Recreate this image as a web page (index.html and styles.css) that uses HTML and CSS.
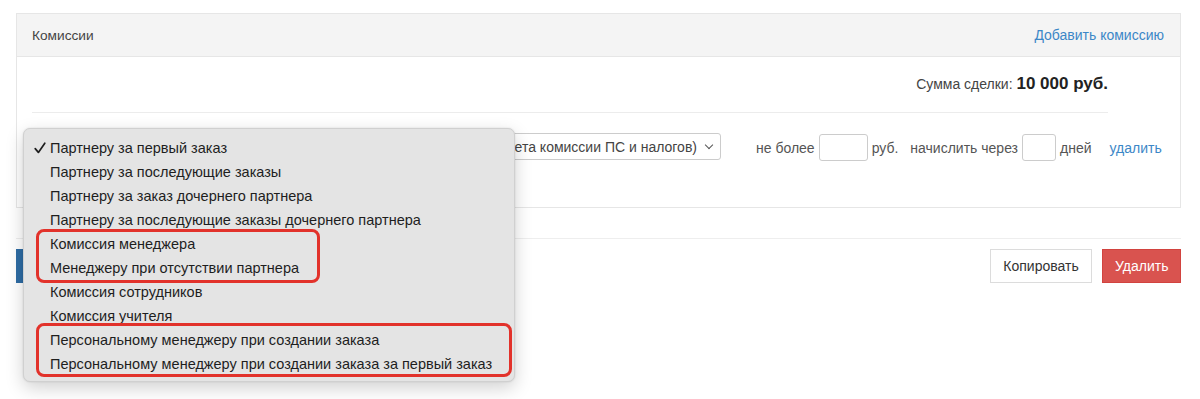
FILE: index.html
```html
<!DOCTYPE html>
<html lang="ru">
<head>
<meta charset="utf-8">
<title>Комиссии</title>
<link rel="stylesheet" href="styles.css">
</head>
<body>
<div class="page">
  <section class="panel">
    <header class="panel-head">
      <span class="panel-title">Комиссии</span>
      <a class="link" href="#">Добавить комиссию</a>
    </header>
    <div class="panel-body">
      <div class="summary">
        <div class="sum">Сумма сделки: <b>10 000 руб.</b></div>
        <hr class="line">
      </div>
      <div class="row">
        <div class="select sel-type" aria-label="Партнеру за первый заказ"><i class="chev"></i></div>
        <div class="select sel-mode"><span>Процент от суммы заказа (без учета комиссии ПС и налогов)</span><i class="chev"></i></div>
        <label class="field">не более <span class="input w-49"></span> руб.</label>
        <label class="field">начислить через <span class="input w-34"></span> дней</label>
        <a class="link del" href="#">удалить</a>
      </div>
    </div>
  </section>
  <hr class="sep">
  <div class="actions">
    <button class="btn btn-primary" aria-label="Сохранить"></button>
    <div class="spacer"></div>
    <button class="btn btn-default">Копировать</button>
    <button class="btn btn-danger">Удалить</button>
  </div>

  <div class="menu">
    <div class="item checked"><svg class="check" width="12" height="12" viewBox="0 0 12 12"><path d="M1.2 6.6 L4.4 10.4 L10.8 1.2" fill="none" stroke="#1e1e1e" stroke-width="1.7" stroke-linecap="round" stroke-linejoin="round"/></svg>Партнеру за первый заказ</div>
    <div class="item">Партнеру за последующие заказы</div>
    <div class="item">Партнеру за заказ дочернего партнера</div>
    <div class="item">Партнеру за последующие заказы дочернего партнера</div>
    <div class="item">Комиссия менеджера</div>
    <div class="item">Менеджеру при отсутствии партнера</div>
    <div class="item">Комиссия сотрудников</div>
    <div class="item">Комиссия учителя</div>
    <div class="item">Персональному менеджеру при создании заказа</div>
    <div class="item">Персональному менеджеру при создании заказа за первый заказ</div>
    <div class="mark mark-1"></div>
    <div class="mark mark-2"></div>
  </div>
</div>
</body>
</html>
```

FILE: styles.css
```css
* { box-sizing: border-box; }
html, body { margin: 0; background: #fff; }
body {
  font-family: "Liberation Sans", Arial, sans-serif;
  font-size: 14px;
  color: #333;
}
.page {
  position: relative;
  padding: 13px 19px 0 16px;
  height: 399px;
}
.panel {
  border: 1px solid #e6e6e6;
  background: #fff;
}
.panel-head {
  display: flex;
  justify-content: space-between;
  align-items: center;
  height: 43px;
  padding: 0 16px 0 15px;
  background: #f4f4f4;
  border-bottom: 1px solid #e6e6e6;
}
.panel-title { font-size: 13.7px; color: #444; }
.link { color: #3c87c7; text-decoration: none; font-size: 14px; }
.panel-body { padding: 17px 16px 45px 15px; }
.summary { margin-right: 56px; }
.sum {
  text-align: right;
  font-size: 14px;
  line-height: 20px;
  color: #444;
}
.sum b { font-size: 17px; color: #222; }
.line {
  border: 0;
  border-top: 1px solid #ececec;
  margin: 18px 0 0;
}
.row {
  display: flex;
  align-items: center;
  margin-top: 20px;
  height: 29px;
  white-space: nowrap;
  color: #555;
  font-size: 14px;
}
.select {
  display: flex;
  align-items: center;
  justify-content: flex-end;
  height: 27px;
  padding: 0 6px 0 8px;
  border: 1px solid #ccc;
  border-radius: 3px;
  background: #fff;
  color: #444;
  overflow: hidden;
  margin-top: -2px;
}
.sel-type { width: 220px; margin-right: 8px; }
.sel-mode { width: 461px; }
.chev {
  flex: none;
  width: 6px; height: 6px;
  border-right: 1.3px solid #555;
  border-bottom: 1.3px solid #555;
  transform: rotate(45deg);
  margin: -3px 2px 0 9px;
}
.field {
  display: flex;
  align-items: center;
  gap: 4px;
}
.field:first-of-type { margin-left: 35px; }
.field + .field { margin-left: 12px; }
.input {
  display: inline-block;
  height: 27px;
  border: 1px solid #ccc;
  border-radius: 3px;
  background: #fff;
}
.w-49 { width: 49px; }
.w-34 { width: 34px; }
.del { margin-left: 18px; }

.sep {
  border: 0;
  border-top: 1px solid #eeeeee;
  margin: 30px 0 10px;
}
.actions {
  display: flex;
  gap: 10px;
}
.spacer { flex: 1; }
.btn {
  height: 34px;
  font-family: inherit;
  font-size: 14px;
  padding: 0 12px;
  border-radius: 0;
  border: 1px solid transparent;
}
.btn-primary { background: #2e6ca4; color: #fff; width: 110px; }
.btn-default { background: #fff; border-color: #dcdcdc; color: #333; width: 102px; }
.btn-danger { background: #d9534f; border-color: #d2433f; color: #fff; width: 79px; }

.menu {
  position: absolute;
  left: 23px;
  top: 128px;
  width: 492px;
  padding: 7px 0 5px;
  background: #e4e4e4;
  border: 1px solid #d0d0d0;
  border-radius: 7px;
  box-shadow: 0 6px 18px rgba(0, 0, 0, 0.18), 0 0 2px rgba(0, 0, 0, 0.12);
  font-family: "Liberation Sans", Arial, sans-serif;
  font-size: 14.5px;
  color: #1e1e1e;
}
.item {
  height: 24px;
  line-height: 24px;
  padding-left: 26px;
  position: relative;
  white-space: nowrap;
}
.check {
  position: absolute;
  left: 10px;
  top: 6px;
}
.mark {
  position: absolute;
  border: 3.5px solid #e2322b;
  border-radius: 8px;
}
.mark-1 { left: 12px; top: 100px; width: 284px; height: 54px; }
.mark-2 { left: 12px; top: 194px; width: 476px; height: 54px; }
```
